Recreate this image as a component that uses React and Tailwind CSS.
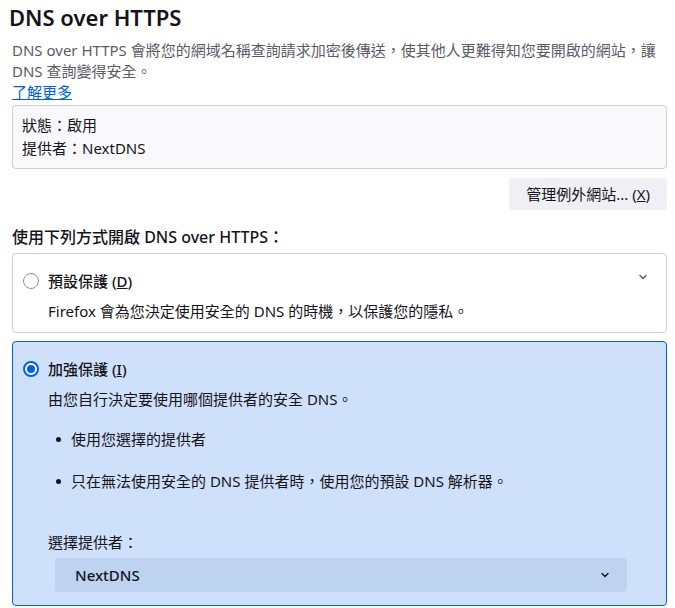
import { useState } from 'react';

const font = { fontFamily: '"Noto Sans", "Noto Sans CJK TC", sans-serif' };

const Chevron = ({ className }) => (
  <svg viewBox="0 0 10 10" className={className} fill="none" stroke="currentColor" strokeWidth="1.4" strokeLinecap="round" strokeLinejoin="round">
    <path d="M2 3.5 5 6.5l3-3" />
  </svg>
);

const Radio = ({ checked }) =>
  checked ? (
    <span className="flex h-4 w-4 shrink-0 items-center justify-center rounded-full border-2 border-[#0061e0] bg-white">
      <span className="h-2 w-2 rounded-full bg-[#0061e0]" />
    </span>
  ) : (
    <span className="h-4 w-4 shrink-0 rounded-full border border-[#8f8f9d] bg-white" />
  );

const App = () => {
  const [mode, setMode] = useState('max');

  return (
    <div className="min-h-[608px] bg-white pl-3 pr-2 text-[#15141a]" style={font}>
      <h1 className="-ml-[3px] pt-[2px] text-[22px] font-semibold leading-[30px]">DNS over HTTPS</h1>
      <p className="mt-2 text-[15px] leading-[21px] text-[#5b5b66]">
        DNS over HTTPS 會將您的網域名稱查詢請求加密後傳送，使其他人更難得知您要開啟的網站，讓 DNS 查詢變得安全。
      </p>
      <a href="#" className="block w-fit text-[15px] leading-[21px] text-[#0061e0] underline">了解更多</a>

      <div className="mt-[2px] rounded border border-[#cfcfd8] bg-[#f9f9fb] px-[9px] py-2 text-[15px] leading-[23px]">
        <div>狀態：啟用</div>
        <div>提供者：NextDNS</div>
      </div>

      <div className="mt-[9px] flex justify-end">
        <button className="h-8 rounded bg-[#f0f0f4] px-[17px] text-[15px] text-[#15141a]">
          管理例外網站... (<span className="underline">X</span>)
        </button>
      </div>

      <h2 className="mt-[15px] text-[16px] font-medium leading-[24px]">使用下列方式開啟 DNS over HTTPS：</h2>

      <div className="mt-1 flex flex-col gap-2">
        <div
          className="cursor-pointer rounded border border-[#cfcfd8] bg-white pb-[10px] pl-[10px] pr-4 pt-[15px]"
          onClick={() => setMode('default')}
        >
          <div className="flex h-6 items-center gap-[9px]">
            <Radio checked={mode === 'default'} />
            <span className="text-[15px] font-medium">預設保護 (<span className="underline">D</span>)</span>
            <Chevron className="ml-auto mr-[2px] h-[10px] w-[10px] -translate-y-1 text-[#5b5b66]" />
          </div>
          <p className="mt-2 pl-[25px] text-[15px] leading-[21px] text-[#15141a]">
            Firefox 會為您決定使用安全的 DNS 的時機，以保護您的隱私。
          </p>
        </div>

        <div
          className="rounded border border-[#0061e0] bg-[#cfe0fa] pb-[13px] pl-[10px] pr-4 pt-[15px]"
          onClick={() => setMode('max')}
        >
          <div className="flex h-6 items-center gap-[9px]">
            <Radio checked={mode === 'max'} />
            <span className="text-[15px] font-medium">加強保護 (<span className="underline">I</span>)</span>
          </div>
          <div className="pl-[25px] text-[15px] leading-[21px]">
            <p className="mt-2">由您自行決定要使用哪個提供者的安全 DNS。</p>
            <ul className="mt-[19px] flex flex-col gap-[21px] pl-2">
              <li className="flex items-center gap-[10px]">
                <span className="h-[5px] w-[5px] rounded-full bg-[#15141a]" />
                使用您選擇的提供者
              </li>
              <li className="flex items-center gap-[10px]">
                <span className="h-[5px] w-[5px] rounded-full bg-[#15141a]" />
                只在無法使用安全的 DNS 提供者時，使用您的預設 DNS 解析器。
              </li>
            </ul>
            <p className="mt-10">選擇提供者：</p>
            <div className="mt-[5px] mr-[23px] ml-[7px] flex h-[34px] items-center rounded bg-[#bed3f0] pl-5 pr-[17px]">
              <span className="font-medium">NextDNS</span>
              <Chevron className="ml-auto h-[10px] w-[10px] text-[#15141a]" />
            </div>
          </div>
        </div>
      </div>
    </div>
  );
};

export default App;
